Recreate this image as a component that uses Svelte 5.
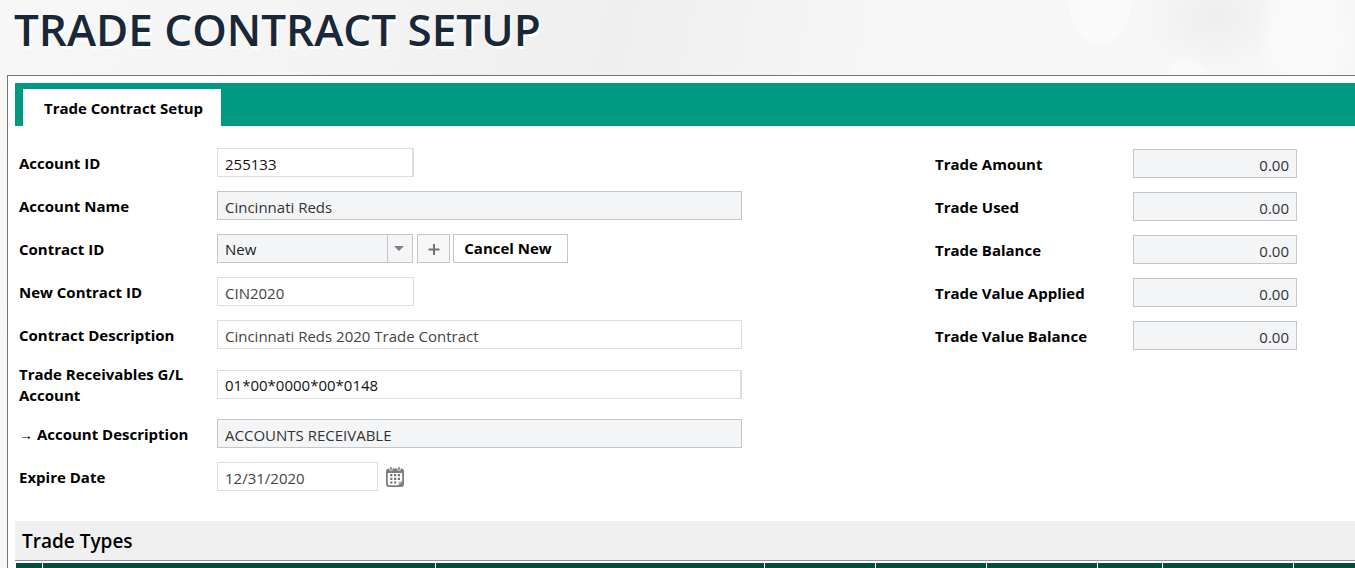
<script>
  let contract = $state('New');
  const totals = [
    ['trade-amount', 'Trade Amount'],
    ['trade-used', 'Trade Used'],
    ['trade-balance', 'Trade Balance'],
    ['value-applied', 'Trade Value Applied'],
    ['value-balance', 'Trade Value Balance']
  ];
  const columns = [27, 393, 329, 111, 111, 111, 65, 131];
</script>

<div class="page">
  <h1>TRADE CONTRACT SETUP</h1>
  <main>
    <nav><button class="tab" type="button">Trade Contract Setup</button></nav>

    <form class="columns">
      <div class="left">
        <div class="row">
          <label for="account-id">Account ID</label>
          <input id="account-id" class="short dark" value="255133" />
        </div>
        <div class="row">
          <label for="account-name">Account Name</label>
          <input id="account-name" class="wide" readonly value="Cincinnati Reds" />
        </div>
        <div class="row">
          <label for="contract-id">Contract ID</label>
          <div class="group">
            <div class="picker">
              <select id="contract-id" bind:value={contract}><option>New</option></select>
              <svg width="24" height="27" viewBox="0 0 24 27" aria-hidden="true"><path d="M.5 0v27" stroke="#c6c6c6" /><path d="M7 11h10l-5 5z" fill="#808080" /></svg>
            </div>
            <button class="plus" type="button" aria-label="Add contract">
              <svg width="12" height="12" viewBox="0 0 12 12"><path d="M6 1v11M.5 6.500h11" stroke="#737373" stroke-width="2" /></svg>
            </button>
            <button class="cancel" type="button">Cancel New</button>
          </div>
        </div>
        <div class="row">
          <label for="new-id">New Contract ID</label>
          <input id="new-id" class="short" value="CIN2020" />
        </div>
        <div class="row">
          <label for="description">Contract Description</label>
          <input id="description" class="wide" value="Cincinnati Reds 2020 Trade Contract" />
        </div>
        <div class="row tall">
          <label for="gl">Trade Receivables G/L Account</label>
          <input id="gl" class="wide dark" value="01*00*0000*00*0148" />
        </div>
        <div class="row">
          <label for="gl-description"><span class="arrow">→</span> Account Description</label>
          <input id="gl-description" class="wide" readonly value="ACCOUNTS RECEIVABLE" />
        </div>
        <div class="row">
          <label for="expires">Expire Date</label>
          <div class="group">
            <input id="expires" class="date" value="12/31/2020" />
            <button class="calendar" type="button" aria-label="Choose date">
              <svg width="18" height="20" viewBox="0 0 18 20">
                <path fill="#7d7d7d" fill-rule="evenodd" d="M3 1.500h12a3 3 0 0 1 3 3V17a3 3 0 0 1-3 3H3a3 3 0 0 1-3-3V4.500a3 3 0 0 1 3-3zM1.800 6v10.500A1.700 1.700 0 0 0 3.500 18.200H12l4.200-4.200V6z" />
                <path d="M5 0v3.500M13 0v3.500" stroke="#fff" stroke-width="3" />
                <path d="M5 0v3M13 0v3" stroke="#7d7d7d" stroke-width="1.500" />
                <path d="M12.500 18.500v-4h4z" fill="#b5b5b5" />
                <path fill="#737373" d="M4.200 7h2.200v2.200H4.200zM8 7h2.200v2.200H8zM11.800 7h2.200v2.200h-2.200zM4.200 10.700h2.200v2.200H4.200zM8 10.700h2.200v2.200H8zM11.800 10.700h2.200v2.200h-2.200zM4.200 14.400h2.200v2.200H4.200zM8 14.400h2.200v2.200H8z" />
              </svg>
            </button>
          </div>
        </div>
      </div>

      <div class="right">
        {#each totals as [id, name]}
          <div class="row">
            <label for={id}>{name}</label>
            <input {id} class="amount" readonly value="0.00" />
          </div>
        {/each}
      </div>
    </form>

    <h2>Trade Types</h2>
    <table aria-label="Trade Types">
      <colgroup>
        {#each columns as width}<col style:width="{width}px" />{/each}
        <col />
      </colgroup>
      <tbody><tr>{#each [...columns, 0] as _}<td></td>{/each}</tr></tbody>
    </table>
  </main>
</div>

<style>
  :global(body) { margin: 0; }
  * { box-sizing: border-box; }
  .page {
    height: 100vh;
    overflow: hidden;
    display: flex;
    flex-direction: column;
    padding-left: 7px;
    font: 15px/21px "Open Sans", "Noto Sans", sans-serif;
    color: #000;
    background:
      radial-gradient(ellipse 33px 46px at 1100px 0, #fafafa 94%, transparent),
      radial-gradient(circle 24px at 1187px 82px, #fafaf9 90%, transparent),
      radial-gradient(ellipse 48px 80px at 1306px 40px, #fafafa 60%, transparent),
      radial-gradient(ellipse 70px 50px at 1215px 18px, #eeeeee, transparent),
      linear-gradient(100deg, #f7f7f7 0, #f4f4f4 22%, #efefef 43%, #f6f6f6 60%, #f7f7f7 100%);
  }
  h1 {
    margin: 0;
    height: 75px;
    flex: none;
    padding: 0 7px;
    font-size: 44px;
    line-height: 58px;
    font-weight: 600;
    color: #192839;
    text-shadow: 2px 3px 1px #fff;
    white-space: nowrap;
  }
  main {
    flex: 1 0 auto;
    border: solid #757575;
    border-width: 1px 0 0 1px;
    padding: 7px 0 0 7px;
    background: #fff;
  }
  nav { display: flex; height: 43px; padding: 6px 8px 0; background: #009981; }
  button { font: inherit; color: inherit; padding: 0; cursor: pointer; }
  .tab { border: 0; padding: 2px 18px 0 21px; background: #fff; font-weight: 700; }
  .columns { display: flex; margin: 15px 0 23px; padding-left: 4px; }
  .left { flex: 0 0 916px; }
  .right { flex: 1; padding-top: 1px; }
  .row { display: flex; align-items: center; min-height: 43px; }
  .tall { min-height: 56px; }
  label { flex: 0 0 198px; padding: 2px 25px 0 0; font-weight: 700; }
  .arrow { font-size: 14px; font-weight: 400; }
  input, select {
    height: 29px;
    margin: 0;
    padding: 2px 7px 0;
    border: 1px solid #dedede;
    border-radius: 0;
    background: #fff;
    color: #444;
    font: inherit;
    outline: 0;
  }
  .short { width: 197px; }
  .wide { width: 525px; }
  .date { width: 161px; }
  .dark { color: #111; border-right-width: 2px; }
  input:read-only { background: #f4f5f7; border-color: #c6c6c6; color: #333; }
  .amount { width: 164px; text-align: right; }
  .group { display: flex; align-items: center; }
  .picker { display: grid; width: 196px; margin-right: 4px; }
  .picker > * { grid-area: 1 / 1; }
  .picker select { appearance: none; background: #f4f5f7; border-color: #c6c6c6; color: #222; }
  .picker svg { justify-self: end; align-self: center; margin-right: 2px; pointer-events: none; }
  .plus, .cancel { height: 29px; border: 1px solid #c6c6c6; }
  .plus { width: 33px; display: grid; place-items: center; background: #f7f7f7; margin-right: 3px; }
  .cancel { width: 115px; padding-right: 5px; background: #fff; font-weight: 700; }
  .calendar { display: flex; margin-left: 8px; border: 0; background: none; }
  h2 {
    margin: 0 0 2px;
    padding: 2px 7px 0;
    border-bottom: 1px solid #949494;
    background: #f0f0f0;
    font-size: 19px;
    line-height: 37px;
    font-weight: 600;
  }
  table { width: 100%; table-layout: fixed; border-collapse: collapse; }
  td { height: 30px; padding: 0; background: #004c3f; border-left: 1px solid #fff; }
</style>
